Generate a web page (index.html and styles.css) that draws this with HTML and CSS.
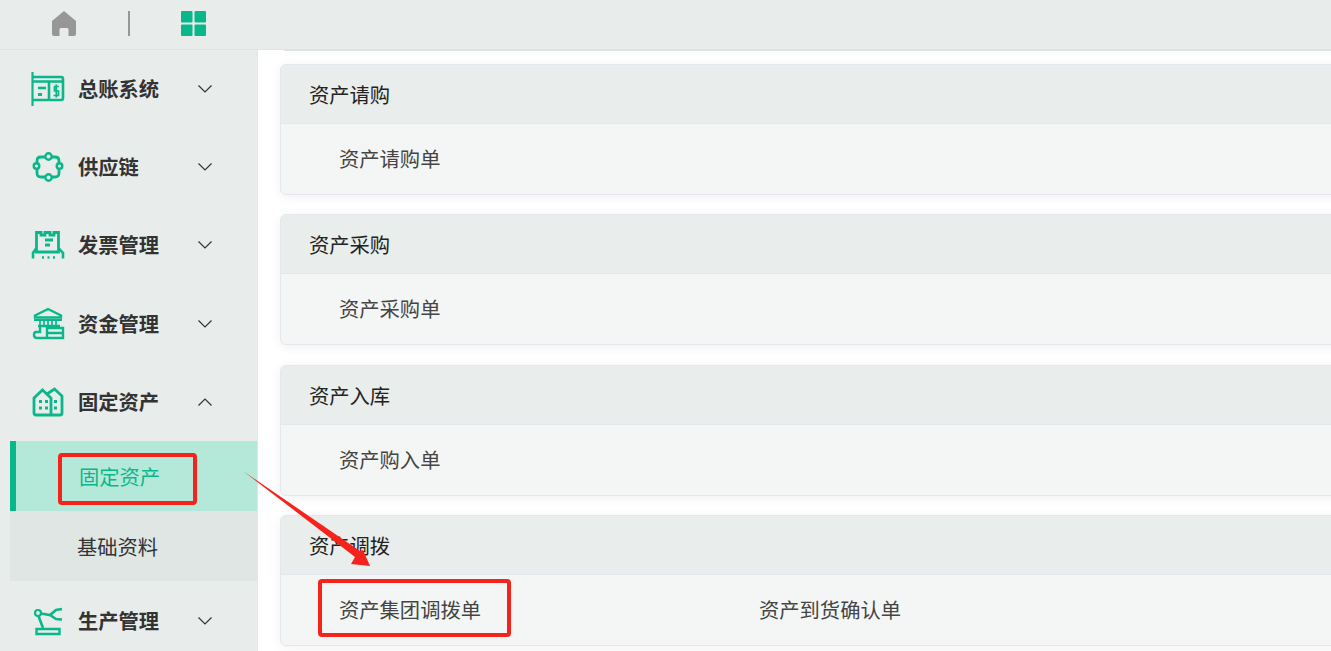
FILE: index.html
```html
<!DOCTYPE html>
<html lang="zh-CN">
<head>
    <meta charset="UTF-8">
    <meta name="viewport" content="width=device-width, initial-scale=1.0">
    <title>固定资产</title>
    <link rel="stylesheet" href="styles.css">
</head>
<body>
    <header class="topbar">
        <svg class="home-icon" viewBox="0 0 24 25"><path d="M12 0 L24 10 V23 Q24 25 22 25 H16.500 V18.500 Q16.500 17 15 17 H9 Q7.500 17 7.500 18.500 V25 H2 Q0 25 0 23 V10 Z"/></svg>
        <span class="topbar-sep"></span>
        <svg class="grid-icon" viewBox="0 0 25 25"><rect width="11.500" height="11.500" rx="1"/><rect x="13.500" width="11.500" height="11.500" rx="1"/><rect y="13.500" width="11.500" height="11.500" rx="1"/><rect x="13.500" y="13.500" width="11.500" height="11.500" rx="1"/></svg>
    </header>

    <div class="layout">
        <nav class="sidebar">
            <div class="menu-item">
                <svg class="menu-icon" viewBox="0 0 34 34"><path d="M1.500 0 V34" stroke-width="2.200"/><path d="M2 5 H30 Q32 5 32 7 V26 Q32 28 30 28 H2 M2 9.500 H32 M18 9.500 V28" stroke-width="2.600"/><path d="M7 16 H15" stroke-width="2.600"/><path d="M7 22.500 H11" stroke-width="3"/><path d="M28 14.500 H23.500 V19 H27.500 V23.500 H22.500 M25.300 12.500 V25.500" stroke-width="1.700"/></svg>
                <span class="menu-label">总账系统</span>
                <svg class="chevron" viewBox="0 0 14 8"><path d="M0.500 0.500 L7 7 L13.500 0.500"/></svg>
            </div>
            <div class="menu-item">
                <svg class="menu-icon" viewBox="0 0 34 34"><path d="M14 7 H10 Q6 7 6 11 V13 M21 7 H24 Q28 7 28 11 V13 M6 19 V23 Q6 27 10 27 H14 M28 19 V23 Q28 27 24 27 H21" stroke-width="2.800"/><circle class="node" cx="17.500" cy="6.500" r="3.200"/><circle class="node" cx="17.500" cy="27.500" r="3.200"/><circle class="node" cx="5.500" cy="16" r="2.800"/><circle class="node" cx="28.500" cy="16" r="2.800"/></svg>
                <span class="menu-label">供应链</span>
                <svg class="chevron" viewBox="0 0 14 8"><path d="M0.500 0.500 L7 7 L13.500 0.500"/></svg>
            </div>
            <div class="menu-item">
                <svg class="menu-icon" viewBox="0 0 34 34"><path d="M5.500 3 V24 H27.500 V3 M5.500 4.500 H10 V7 H14 V4.500 H19 V7 H23 V4.500 H27.500" stroke-width="2.800"/><path d="M14 12 H22 M14 17 H19" stroke-width="2.800"/><path d="M5.500 20 L2 25 V30.500 M27.500 20 L32 25 V30.500" stroke-width="2.600"/><path d="M11 29.500 H13 M16.500 29.500 H18.500 M22 29.500 H24" stroke-width="2.600"/></svg>
                <span class="menu-label">发票管理</span>
                <svg class="chevron" viewBox="0 0 14 8"><path d="M0.500 0.500 L7 7 L13.500 0.500"/></svg>
            </div>
            <div class="menu-item">
                <svg class="menu-icon" viewBox="0 0 34 34"><path d="M4 8.500 L17 2 L30 8.500 V10.500 H4 Z" stroke-width="2.400"/><path d="M3 13 H31" stroke-width="2"/><path d="M9 14 V19 M13 14 V19 M17 14 V19 M21 14 V19 M25 14 V19" stroke-width="1.700"/><path d="M9 19 V25 H5 Q3 25 3 28 Q3 31 6 31 H32 V21 H16 V31 M16 26 H32 M7 19 H29" stroke-width="2.400"/></svg>
                <span class="menu-label">资金管理</span>
                <svg class="chevron" viewBox="0 0 14 8"><path d="M0.500 0.500 L7 7 L13.500 0.500"/></svg>
            </div>
            <div class="menu-item">
                <svg class="menu-icon" viewBox="0 0 34 34"><path d="M3 13 L11.500 5 L20 13 V30 H5 Q3 30 3 28 Z M16 9 L23.500 4 L31 11 V28 Q31 30 29 30 H20" stroke-width="2.800"/><path d="M8 16.500 H11 M14 16.500 H17 M8 23 H11 M14 23 H17 M23 16.500 H26 M23 23 H26" stroke-width="3"/></svg>
                <span class="menu-label">固定资产</span>
                <svg class="chevron" viewBox="0 0 14 8"><path d="M0.500 7.500 L7 1 L13.500 7.500"/></svg>
            </div>
            <div class="submenu">
                <div class="submenu-item active">固定资产</div>
                <div class="submenu-item">基础资料</div>
            </div>
            <div class="menu-item">
                <svg class="menu-icon" viewBox="0 0 34 34"><circle cx="7" cy="9" r="3" stroke-width="2.200"/><path d="M10 9.500 L19 11 L25 6 L31 5 M19 11 L25 15 L31 15.500 M7.500 12 L12 24" stroke-width="2.600"/><path d="M5.500 25 H28.500 V30 H5.500 Z" stroke-width="2.400"/></svg>
                <span class="menu-label">生产管理</span>
                <svg class="chevron" viewBox="0 0 14 8"><path d="M0.500 0.500 L7 7 L13.500 0.500"/></svg>
            </div>
        </nav>

        <main class="content">
            <div class="content-line"></div>

            <section class="card">
                <div class="card-header">资产请购</div>
                <div class="card-body"><span class="card-link">资产请购单</span></div>
            </section>
            <section class="card">
                <div class="card-header">资产采购</div>
                <div class="card-body"><span class="card-link">资产采购单</span></div>
            </section>
            <section class="card">
                <div class="card-header">资产入库</div>
                <div class="card-body"><span class="card-link">资产购入单</span></div>
            </section>
            <section class="card">
                <div class="card-header">资产调拨</div>
                <div class="card-body">
                    <span class="card-link">资产集团调拨单</span>
                    <span class="card-link">资产到货确认单</span>
                </div>
            </section>
        </main>
    </div>

    <!-- annotations drawn over the screenshot -->
    <div class="mark mark-menu"></div>
    <div class="mark mark-link"></div>
    <svg class="arrow" viewBox="0 0 1331 651">
        <path d="M243 471 L355 557 L351 564 L370 566 L363 550 L360 551 Z" fill="#f5231b"/>
    </svg>
</body>
</html>
```

FILE: styles.css
```css
* {
    box-sizing: border-box;
}

html,
body {
    height: 100%;
}

body {
    margin: 0;
    overflow: hidden;
    background-color: #fff;
    color: #333;
    font-family: "Noto Sans CJK SC", "Liberation Sans", sans-serif;
    font-size: 20.300px;
}

.topbar {
    display: flex;
    align-items: center;
    height: 50px;
    padding: 0 0 2px 52px;
    background-color: #e8eceb;
    border-bottom: 1px solid #dfe3e2;
}

.home-icon {
    width: 24px;
    height: 25px;
    fill: #979797;
}

.topbar-sep {
    width: 2px;
    height: 25px;
    margin-left: 52px;
    background-color: #979797;
}

.grid-icon {
    width: 25px;
    height: 25px;
    margin-left: 51px;
    fill: #0ab78a;
}

.layout {
    display: flex;
    height: 601px;
}

.sidebar {
    flex: none;
    width: 258px;
    overflow: hidden;
    background-color: #e8eceb;
    border-right: 1px solid #e2e6e5;
}

.menu-item {
    display: flex;
    flex: none;
    align-items: center;
    height: 78.200px;
    padding-left: 31px;
}

.menu-icon {
    flex: none;
    width: 34px;
    height: 34px;
    fill: none;
    stroke: #0ab78a;
    stroke-width: 2.400;
}

.node {
    fill: #e8eceb;
    stroke-width: 2.400;
}

.menu-label {
    width: 120px;
    margin: 0 0 2px 13px;
    color: #333;
    font-weight: 700;
    line-height: 1;
}

.chevron {
    width: 14px;
    height: 8px;
    fill: none;
    stroke: #333;
    stroke-width: 1.200;
}

.submenu {
    margin: 0 0 1px 10px;
    background-color: #dfe6e4;
}

.submenu-item {
    display: flex;
    align-items: center;
    height: 70px;
    padding-left: 67px;
    line-height: 1;
}

.submenu-item.active {
    padding-left: 63px;
    border-left: 6px solid #0ab78a;
    background-color: #b4e9da;
    color: #0ab78a;
}

.content {
    flex: 1;
    min-width: 0;
    overflow: hidden;
    padding-left: 22px;
}

.content-line {
    height: 1px;
    margin-left: 4px;
    background-color: #dfe2e6;
}

.card {
    width: 1200px;
    height: 131px;
    margin: 13px 0 19.330px;
    overflow: hidden;
    border: 1px solid #e4e7ed;
    border-radius: 6px;
    background-color: #f4f6f5;
    box-shadow: 0 2px 12px rgba(0, 0, 0, 0.06);
}

.card + .card {
    margin-top: 0;
}

.card-header {
    display: flex;
    align-items: center;
    height: 59px;
    padding-left: 28px;
    border-bottom: 1px solid #e4e7ed;
    background-color: #e9edec;
    color: #222;
    line-height: 1;
}

.card-body {
    display: grid;
    grid-template-columns: repeat(2, 420px);
    align-items: center;
    height: 70px;
    padding: 0 0 2px 58px;
}

.card-link {
    color: #444;
    line-height: 1;
}

.mark {
    position: absolute;
    border: 4px solid #f5231b;
    border-radius: 4px;
}

.mark-menu {
    left: 58px;
    top: 453px;
    width: 139px;
    height: 52px;
}

.mark-link {
    left: 318px;
    top: 579px;
    width: 193px;
    height: 58px;
}

.arrow {
    position: absolute;
    left: 0;
    top: 0;
    width: 1331px;
    height: 651px;
    pointer-events: none;
}
```
